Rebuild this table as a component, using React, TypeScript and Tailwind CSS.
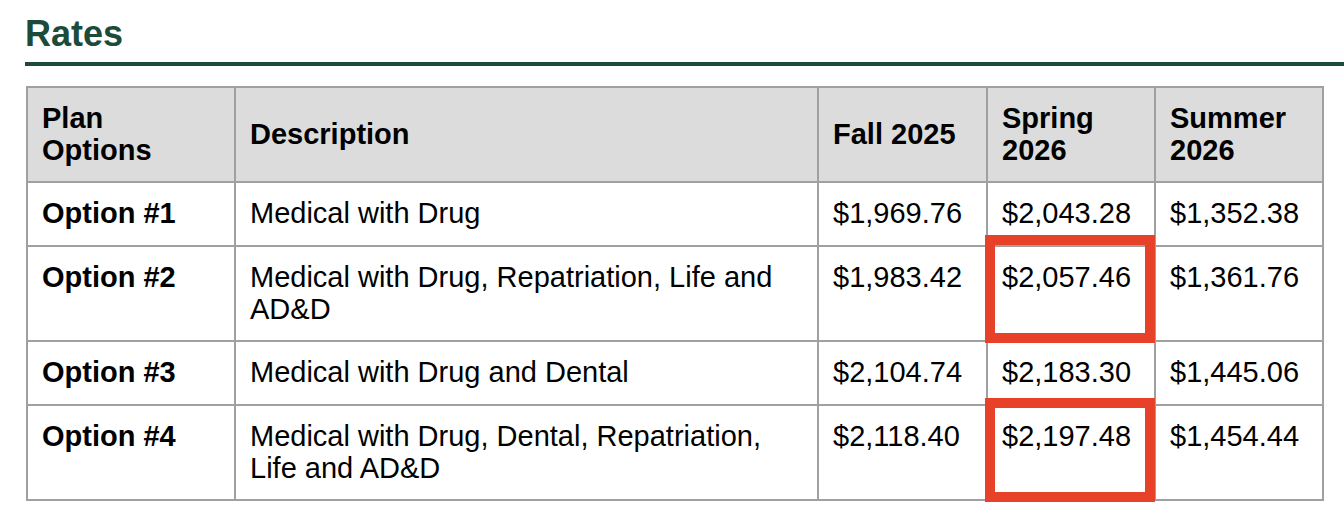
const rows = [
  { plan: "Option #1", desc: "Medical with Drug", fall: "$1,969.76", spring: "$2,043.28", summer: "$1,352.38" },
  { plan: "Option #2", desc: "Medical with Drug, Repatriation, Life and AD&D", fall: "$1,983.42", spring: "$2,057.46", summer: "$1,361.76" },
  { plan: "Option #3", desc: "Medical with Drug and Dental", fall: "$2,104.74", spring: "$2,183.30", summer: "$1,445.06" },
  { plan: "Option #4", desc: "Medical with Drug, Dental, Repatriation, Life and AD&D", fall: "$2,118.40", spring: "$2,197.48", summer: "$1,454.44" },
];

const headCell = "bg-[#dcdcdc] font-bold flex items-center px-[14px] pt-[14px] pb-[15px]";
const cell = "bg-white min-h-[62px] px-[14px] pt-[14px] pb-[15px]";

export default function App() {
  return (
    <div className="w-[1344px] h-[516px] bg-white pl-[25px] pt-[14px] font-['Liberation_Sans',Arial,sans-serif] text-black overflow-hidden">
      <h2 className="text-[36px] leading-[40px] font-bold text-[#1d4b39]">Rates</h2>
      <div className="mt-[8px] h-[4px] bg-[#1d4b39]" />

      <div className="relative mt-[20px] ml-[1px] w-fit">
        <div className="grid grid-cols-[206px_581px_167px_166px_166px] gap-[2px] p-[2px] bg-[#a0a0a0] text-[29px] leading-[32px]">
          <div className={headCell}>
            Plan
            <br />
            Options
          </div>
          <div className={headCell}>Description</div>
          <div className={headCell}>Fall 2025</div>
          <div className={headCell}>Spring 2026</div>
          <div className={headCell}>Summer 2026</div>

          {rows.map((r) => (
            <div key={r.plan} className="contents">
              <div className={`${cell} font-bold`}>{r.plan}</div>
              <div className={cell}>{r.desc}</div>
              <div className={cell}>{r.fall}</div>
              <div className={cell}>{r.spring}</div>
              <div className={cell}>{r.summer}</div>
            </div>
          ))}
        </div>

        {/* highlight boxes */}
        <div className="absolute left-[959px] top-[149px] w-[170px] h-[108px] border-[10px] border-[#e8412a]" />
        <div className="absolute left-[959px] top-[312px] w-[170px] h-[104px] border-[10px] border-[#e8412a]" />
      </div>
    </div>
  );
}
